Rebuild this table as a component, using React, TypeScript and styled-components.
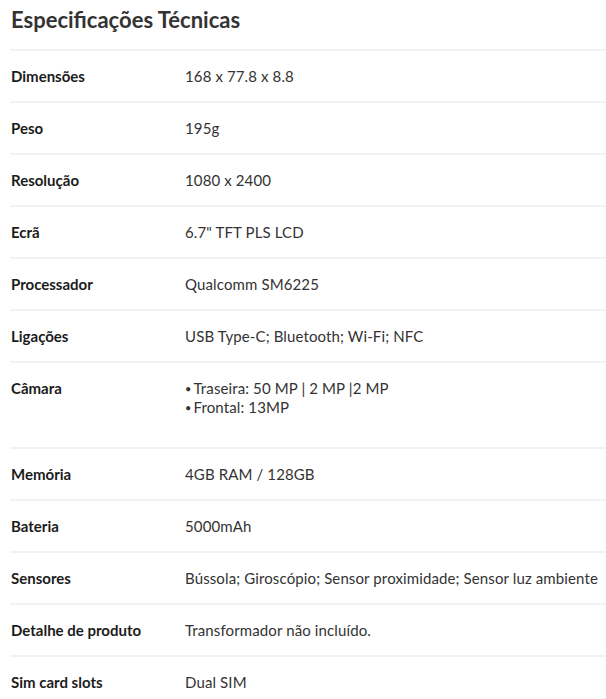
import React from "react";
import styled, { createGlobalStyle } from "styled-components";

const Global = createGlobalStyle`
  html, body { margin: 0; padding: 0; background: #fff; }
  body { font-family: Lato, "Open Sans", sans-serif; -webkit-font-smoothing: antialiased; }
`;

const Page = styled.div`
  padding-left: 10px;
  width: 596px;
  overflow: hidden;
`;

const Title = styled.h2`
  margin: 0;
  padding: 7px 0 16px 1px;
  font-size: 22px;
  line-height: 26px;
  font-weight: 700;
  color: #333;
`;

const Row = styled.div`
  display: grid;
  grid-template-columns: 175px 1fr;
  border-top: 2px solid #f2f2f2;
  padding: 16px 0;
  font-size: 15px;
  line-height: 18px;
`;

const Label = styled.div`
  padding-left: 1px;
  font-weight: 700;
  color: #1c1c1c;
`;

const Value = styled.div<{ $height?: number }>`
  color: #333;
  white-space: nowrap;
  letter-spacing: 0.12px;
  min-height: ${(p) => p.$height ?? 18}px;
`;

const Bullet = styled.span`
  font-size: 11px;
  vertical-align: 1px;
  margin-right: 2px;
`;

const specs: { label: string; value: React.ReactNode; height?: number }[] = [
  { label: "Dimensões", value: "168 x 77.8 x 8.8" },
  { label: "Peso", value: "195g" },
  { label: "Resolução", value: "1080 x 2400" },
  { label: "Ecrã", value: "6.7\" TFT PLS LCD" },
  { label: "Processador", value: "Qualcomm SM6225" },
  { label: "Ligações", value: "USB Type-C; Bluetooth; Wi-Fi; NFC" },
  {
    label: "Câmara",
    value: (
      <>
        <Bullet>•</Bullet>Traseira: 50 MP | 2 MP |2 MP
        <br />
        <Bullet>•</Bullet>Frontal: 13MP
      </>
    ),
    height: 52,
  },
  { label: "Memória", value: "4GB RAM / 128GB" },
  { label: "Bateria", value: "5000mAh" },
  { label: "Sensores", value: "Bússola; Giroscópio; Sensor proximidade; Sensor luz ambiente" },
  { label: "Detalhe de produto", value: "Transformador não incluído." },
  { label: "Sim card slots", value: "Dual SIM" },
];

export default function App() {
  return (
    <Page>
      <Global />
      <Title>Especificações Técnicas</Title>
      {specs.map((s) => (
        <Row key={s.label}>
          <Label>{s.label}</Label>
          <Value $height={s.height}>{s.value}</Value>
        </Row>
      ))}
    </Page>
  );
}
